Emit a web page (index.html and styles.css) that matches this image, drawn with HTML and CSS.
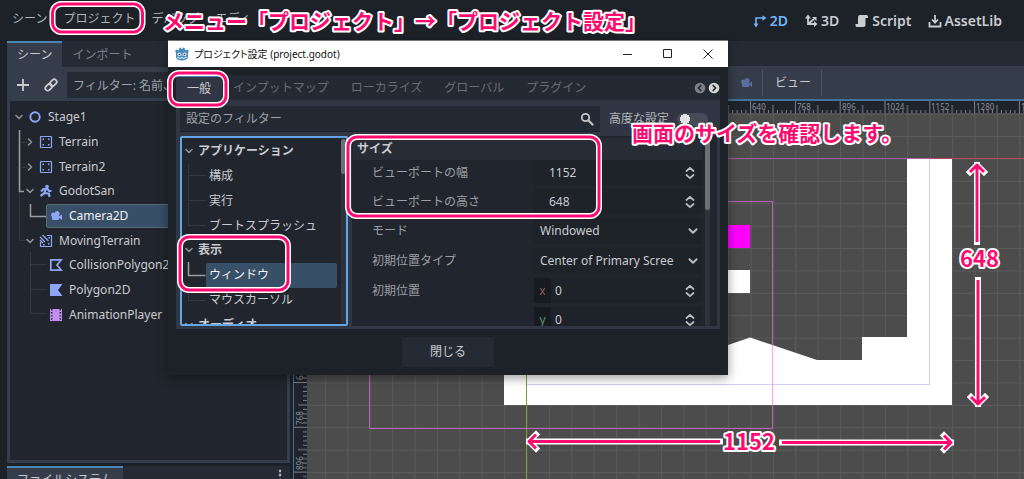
FILE: index.html
```html
<!DOCTYPE html>
<html lang="ja">
<head>
<meta charset="utf-8">
<title>プロジェクト設定</title>
<link rel="stylesheet" href="styles.css">
</head>
<body>
<svg class="defs" width="0" height="0" aria-hidden="true">
  <symbol id="down" viewBox="0 0 10 10"><path d="M2 3.5 5 6.5 8 3.5" fill="none" stroke="currentColor" stroke-width="1.6" stroke-linecap="round" stroke-linejoin="round"/></symbol>
  <symbol id="right" viewBox="0 0 10 10"><path d="M3.5 2 6.5 5 3.5 8" fill="none" stroke="currentColor" stroke-width="1.6" stroke-linecap="round" stroke-linejoin="round"/></symbol>
  <symbol id="updown" viewBox="0 0 12 14"><path d="M2.5 5 6 1.8 9.5 5M2.5 9 6 12.2 9.5 9" fill="none" stroke="currentColor" stroke-width="1.8" stroke-linecap="round" stroke-linejoin="round"/></symbol>
  <symbol id="camera" viewBox="0 0 14 14"><path d="M8.2 2a2.7 2.7 0 0 0-2.6 2A2.3 2.3 0 1 0 3 7.8V10a1 1 0 0 0 1 1h5a1 1 0 0 0 1-1V9l3 2V5.500l-3 1.800V6.500A2.700 2.700 0 0 0 8.200 2z" fill="currentColor"/></symbol>
  <symbol id="tilemap" viewBox="0 0 14 14"><rect x="1.500" y="1.500" width="11" height="11" rx=".5" fill="none" stroke="currentColor" stroke-width="1.200"/><path d="M3.500 3.500h1.500v1.500H3.500zM9 3.500h1.500v1.500H9zM3.500 9h1.500v1.500H3.500zM9 9h1.500v1.500H9z" fill="currentColor"/></symbol>
</svg>

<div class="editor">
  <header class="menubar">
    <nav class="menus">
      <button>シーン</button><button>プロジェクト</button><button>デバッグ</button><button>エディ</button>
    </nav>
    <nav class="modes">
      <button class="mode on"><svg width="14" height="14" viewBox="0 0 14 14"><path d="M3 12V4h8" fill="none" stroke="currentColor" stroke-width="1.600"/><path d="M.5 9.500h5L3 13.500zM9.500 1.300v5.400L13.500 4z" fill="currentColor"/></svg>2D</button>
      <button class="mode"><svg width="14" height="14" viewBox="0 0 14 14"><path d="M4 3v7h7M4 10l6-5" fill="none" stroke="currentColor" stroke-width="1.800"/><path d="M1 4.500h6L4 .5zM10 7v6l3.500-3zM8 3h4.500v4z" fill="currentColor"/></svg>3D</button>
      <button class="mode"><svg width="14" height="14" viewBox="0 0 14 14"><path d="M5 1h6.500A1.500 1.500 0 0 1 13 2.500V4h-2.500v7A2 2 0 0 1 8.500 13H2a1.500 1.500 0 0 1-1.500-1.500V10H3V3a2 2 0 0 1 2-2z" fill="currentColor"/></svg>Script</button>
      <button class="mode"><svg width="14" height="14" viewBox="0 0 14 14"><path d="M1.500 8v4.500h11V8" fill="none" stroke="currentColor" stroke-width="1.800"/><path d="M7 1v7M4 5.500 7 8.700l3-3.200" fill="none" stroke="currentColor" stroke-width="1.800"/></svg>AssetLib</button>
    </nav>
  </header>

  <div class="workspace">
    <aside class="dock">
      <div class="tabs"><button class="tab on">シーン</button><button class="tab">インポート</button></div>
      <section class="panel">
        <div class="tools">
          <button class="icon" aria-label="追加"><svg width="14" height="14" viewBox="0 0 14 14"><path d="M7 1v12M1 7h12" stroke="currentColor" stroke-width="1.800"/></svg></button>
          <button class="icon" aria-label="リンク"><svg width="14" height="14" viewBox="0 0 14 14"><g fill="none" stroke="currentColor" stroke-width="1.800" transform="rotate(-45 7 7)"><rect x="0" y="4.500" width="7.500" height="5" rx="2.500"/><rect x="6.500" y="4.500" width="7.500" height="5" rx="2.500"/></g></svg></button>
          <input class="filter" aria-label="フィルター" placeholder="フィルター: 名前、">
        </div>
        <div class="scene">
          <svg class="guides" width="60" height="230" aria-hidden="true">
            <path d="M9.500 87v52.500h6M12 41.500h5M12 66.500h5M20.500 151v61.500h16M20.500 163.500h16M20.500 188.500h16" fill="none" stroke="#343941"/>
            <path d="M9.500 29v61.500H14M20.500 103v12.500H36" fill="none" stroke="#9a9da1" stroke-width="1.500"/>
          </svg>
          <ul class="tree">
            <li><svg class="fold"><use href="#down"/></svg><svg class="node" viewBox="0 0 14 14"><circle cx="7" cy="7" r="4.700" fill="none" stroke="currentColor" stroke-width="1.900"/></svg>Stage1</li>
            <li class="in1"><svg class="fold"><use href="#right"/></svg><svg class="node"><use href="#tilemap"/></svg>Terrain</li>
            <li class="in1"><svg class="fold"><use href="#right"/></svg><svg class="node"><use href="#tilemap"/></svg>Terrain2</li>
            <li class="in1"><svg class="fold"><use href="#down"/></svg><svg class="node" viewBox="0 0 14 14"><circle cx="8" cy="2.600" r="1.900" fill="currentColor"/><path d="M2 7.500 4.500 5h4l1.500 2h2.500M6.500 5.500l-1 3.500-4 3M6 9l4 .7.500 3.300" fill="none" stroke="currentColor" stroke-width="2.200"/></svg>GodotSan</li>
            <li class="in2 picked"><span><svg class="node"><use href="#camera"/></svg>Camera2D</span></li>
            <li class="in1"><svg class="fold"><use href="#down"/></svg><svg class="node" viewBox="0 0 14 14"><path d="M5 12.500h7.500V1.500H8M1.500 8v4.500H5" fill="none" stroke="currentColor" stroke-width="1.200"/><path d="m1 3 5 5M3.500 1l6 6M1 6l3 3" stroke="currentColor" stroke-width="1.300"/><path d="M9 9h1.500v1.500H9zM4 10h1.500v1.500H4zM9.500 3H11v1.500H9.500z" fill="currentColor"/></svg>MovingTerrain</li>
            <li class="in2"><span><svg class="node" viewBox="0 0 14 14"><path d="M1.800 1.800h10.400L8 7l4.200 5.200H1.800z" fill="none" stroke="currentColor" stroke-width="1.700"/></svg>CollisionPolygon2D</span></li>
            <li class="in2"><span><svg class="node" viewBox="0 0 14 14"><path d="M1 1h12.500L9 7l4.500 6H1z" fill="currentColor"/></svg>Polygon2D</span></li>
            <li class="in2"><span><svg class="node violet" viewBox="0 0 14 14"><path d="M1 1h12v12H1z" fill="currentColor"/><path d="M2.700 1v12M11.300 1v12" stroke="#21262e" stroke-width="1.500" stroke-dasharray="1.400 1.700"/></svg>AnimationPlayer</span></li>
          </ul>
        </div>
      </section>
      <div class="tabs lower"><button class="tab on">ファイルシステム</button><span class="dots">⋮</span></div>
    </aside>

    <main class="main">
      <div class="doctabs"></div>
      <div class="toolbar">
        <button class="cam" aria-label="カメラ"><svg width="14" height="14"><use href="#camera"/></svg></button>
        <button class="view">ビュー</button>
      </div>
      <div class="viewport">
        <svg class="stage" width="100%" height="100%">
          <defs>
            <pattern id="grid" x="526.500" y="158.500" width="22.400" height="22.400" patternUnits="userSpaceOnUse"><path d="M0 .5h22.400M.5 0v22.400" stroke="#5b5b5b" fill="none"/></pattern>
            <pattern id="tx" x="526.100" y="101" width="44.800" height="13" patternUnits="userSpaceOnUse"><path d="M.5 0v13M22.900 4v9M5 9v4M9.500 9v4M14 9v4M18.400 9v4M27.400 9v4M31.900 9v4M36.300 9v4M40.800 9v4" stroke="#7d8086"/></pattern>
            <pattern id="ty" x="294" y="158" width="13" height="44.800" patternUnits="userSpaceOnUse"><path d="M0 .5h13M4 22.900h9M9 5h4M9 9.500h4M9 14h4M9 18.400h4M9 27.400h4M9 31.900h4M9 36.300h4M9 40.800h4" stroke="#7d8086"/></pattern>
          </defs>
          <g transform="translate(-294 -101)">
            <rect x="294" y="101" width="3000" height="2000" fill="#4c4c4c"/>
            <rect x="294" y="101" width="3000" height="2000" fill="url(#grid)"/>
            <path d="M504 360h180l66-22.500 67 22.500h45v-23h45V158h45v247H504z" fill="#fff"/>
            <path d="M600 225h150v23H600z" fill="#f0f"/>
            <path d="M600 270h150v23H600z" fill="#fff"/>
            <path d="M526.500 158.500H3000" stroke="#b04a58"/>
            <path d="M526.500 158.500V3000" stroke="#7aa52c"/>
            <path d="M526.500 158.500h403v226h-403" fill="none" stroke="#9c8cf0" stroke-opacity=".45"/>
            <path d="M369.500 201.500h403v227h-403z" fill="none" stroke="#f06cf4" stroke-opacity=".65"/>
            <path d="M526.500 158.500H907" stroke="#a05a9a"/>
            <rect x="294" y="101" width="3000" height="12" fill="#1f242c"/>
            <rect x="307" y="101" width="3000" height="12" fill="url(#tx)"/>
            <rect x="294" y="113" width="13" height="2000" fill="#1f242c"/>
            <rect x="294" y="113" width="13" height="2000" fill="url(#ty)"/>
            <g class="ticks">
              <text x="752" y="110">640</text><text x="797" y="110">768</text><text x="842" y="110">896</text><text x="886" y="110">1024</text><text x="931" y="110">1152</text><text x="976" y="110">1280</text><text x="1021" y="110">1408</text>
              <text transform="translate(303 380) rotate(-90)">640</text><text transform="translate(303 425) rotate(-90)">768</text><text transform="translate(303 470) rotate(-90)">896</text>
            </g>
          </g>
        </svg>
      </div>
    </main>
  </div>
</div>

<section class="dialog" role="dialog" aria-label="プロジェクト設定">
  <div class="title">
    <svg width="14" height="14" viewBox="0 0 14 14"><path d="M1 5.500 0 4l1.500-1.500L3 3.300l1-.6L4.300 1 6 .6l.5 1.400h1L8 .6l1.700.4.300 1.700 1 .6 1.500-.8L14 4l-1 1.500V10c0 2-3 3.500-6 3.500S1 12 1 10z" fill="#478cbf"/><circle cx="4.300" cy="7.300" r="1.700" fill="#fff"/><circle cx="9.700" cy="7.300" r="1.700" fill="#fff"/><circle cx="4.500" cy="7.300" r=".9" fill="#414042"/><circle cx="9.500" cy="7.300" r=".9" fill="#414042"/><path d="M7 7v2M2 10.200l2 .3.300 1h1.500l.2-.9h2l.2.900h1.500l.3-1 2-.3" fill="none" stroke="#fff" stroke-width=".8"/></svg>
    <span>プロジェクト設定 (project.godot)</span>
    <div class="winbtns">
      <button aria-label="最小化"><svg width="10" height="10"><path d="M0 5.500h9" stroke="#222"/></svg></button>
      <button aria-label="最大化"><svg width="10" height="10"><path d="M.5 .5h8v8h-8z" fill="none" stroke="#222"/></svg></button>
      <button aria-label="閉じる"><svg width="10" height="10"><path d="m.5.500 9 9m0-9-9 9" stroke="#222"/></svg></button>
    </div>
  </div>
  <div class="content">
    <div class="dtabs">
      <button class="dtab on">一般</button><button class="dtab">インプットマップ</button><button class="dtab">ローカライズ</button><button class="dtab">グローバル</button><button class="dtab">プラグイン</button>
      <svg class="pager" width="26" height="12" viewBox="0 0 26 12"><circle cx="6" cy="6" r="5.300" fill="#7d8086"/><circle cx="20" cy="6" r="5.300" fill="#d4d6d8"/><path d="M7.300 3 4.500 6l2.800 3M18.700 3l2.800 3-2.800 3" fill="none" stroke="#242a33" stroke-width="1.700"/></svg>
    </div>
    <div class="dpanel">
      <div class="searchrow">
        <div class="search"><input aria-label="設定のフィルター" placeholder="設定のフィルター"><svg width="14" height="14" viewBox="0 0 14 14"><circle cx="5.500" cy="5.500" r="3.700" fill="none" stroke="#c4c6c9" stroke-width="1.800"/><path d="m8.500 8.500 4 4" stroke="#c4c6c9" stroke-width="2.200" stroke-linecap="round"/></svg></div>
        <label class="adv">高度な設定<input type="checkbox" class="switch"></label>
      </div>
      <div class="split">
        <div class="cats">
          <svg class="guides" width="60" height="190" aria-hidden="true"><path d="M6.500 26v61.500h17M6.500 37.500h17M6.500 62.500h17M6.500 145v17.500h17" fill="none" stroke="#343941"/><path d="M6.500 124v13.500h17" fill="none" stroke="#9a9da1" stroke-width="1.500"/></svg>
          <ul class="ctree">
            <li class="head"><svg class="fold"><use href="#down"/></svg>アプリケーション</li>
            <li><span>構成</span></li><li><span>実行</span></li><li><span>ブートスプラッシュ</span></li>
            <li class="head"><svg class="fold"><use href="#down"/></svg>表示</li>
            <li><span class="sel">ウィンドウ</span></li><li><span>マウスカーソル</span></li>
            <li class="head"><svg class="fold"><use href="#down"/></svg>オーディオ</li>
          </ul>
          <div class="bar"><i class="short"></i></div>
        </div>
        <div class="props">
          <div class="fields">
            <h3>サイズ</h3>
            <div class="row"><label for="w">ビューポートの幅</label><div class="num"><input id="w" class="pad" value="1152"><svg><use href="#updown"/></svg></div></div>
            <div class="row"><label for="h">ビューポートの高さ</label><div class="num"><input id="h" class="pad" value="648"><svg><use href="#updown"/></svg></div></div>
            <div class="row"><label for="m">モード</label><div class="num tall"><select id="m"><option>Windowed</option></select><svg class="chev" viewBox="0 0 10 10"><use href="#down"/></svg></div></div>
            <div class="row"><label for="p">初期位置タイプ</label><div class="num tall"><select id="p"><option>Center of Primary Scree</option></select><svg class="chev" viewBox="0 0 10 10"><use href="#down"/></svg></div></div>
            <div class="row"><label for="x">初期位置</label><div class="num"><b class="ax red">x</b><input id="x" value="0"><svg><use href="#updown"/></svg></div></div>
            <div class="row"><span></span><div class="num"><b class="ax green">y</b><input aria-label="初期位置 y" value="0"><svg><use href="#updown"/></svg></div></div>
          </div>
          <div class="bar"><i></i></div>
        </div>
      </div>
    </div>
    <button class="close">閉じる</button>
  </div>
</section>

<svg class="notes" width="1024" height="479">
  <defs>
    <g id="marks" fill="none" stroke-linecap="round" stroke-linejoin="round">
      <rect x="52.500" y="4" width="90" height="28" rx="9"/>
      <rect x="170" y="73" width="56" height="32" rx="9"/>
      <rect x="348" y="137" width="251" height="79" rx="9"/>
      <rect x="180" y="237" width="108" height="53" rx="9"/>
    </g>
    <g id="arrows" fill="none" stroke-linejoin="round">
      <path d="M977 242V165M970 172 977 165l7 7M978 280v124M971 397 978 404l7-7M720 441.500H529M536 434.500 529 441.500l7 7M782 442.500h169M944 435.500l7 7-7 7"/>
    </g>
  </defs>
  <use href="#marks" class="halo"/><use href="#marks" class="ink"/>
  <use href="#arrows" class="halo round"/><use href="#arrows" class="ink"/>
  <g class="words">
    <text x="163" y="29">メニュー「プロジェクト」→「プロジェクト設定」</text>
    <text x="632" y="141">画面のサイズを確認します。</text>
    <text class="big" x="960" y="267">648</text>
    <text class="big" x="723" y="450">1152</text>
  </g>
</svg>
</body>
</html>
```
FILE: styles.css
```css
* { box-sizing: border-box; }
body { margin: 0; height: 100vh; overflow: hidden; position: relative; background: #1d2229; color: #c9cbce; font: 12px/18px "Noto Sans", "Noto Sans CJK JP", sans-serif; }
button, input, select { font: inherit; color: inherit; background: none; border: 0; margin: 0; padding: 0; outline: 0; border-radius: 0; }
input, select { min-width: 0; width: 100%; }
ul { list-style: none; margin: 0; padding: 0; }
svg { flex: none; }
.defs { position: absolute; }

.editor { display: flex; flex-direction: column; height: 100%; }
.menubar { display: flex; flex: none; justify-content: space-between; height: 41px; padding: 0 22px 0 12px; }
.menus { display: flex; gap: 16px; }
.menus button { padding-bottom: 4px; color: #b2b4b8; }
.modes { display: flex; gap: 16px; }
.mode { display: flex; align-items: center; gap: 3px; font-size: 14px; font-weight: 600; }
.mode.on { color: #70b5fb; }

.workspace { display: flex; flex: 1; min-height: 0; padding-left: 7px; gap: 3px; }
.dock { display: flex; flex-direction: column; flex: 0 0 283px; min-width: 0; }
.tabs { display: flex; height: 26px; flex: none; background: #252b35; }
.tab { padding: 0 10px; color: #7c8087; border-top: 2px solid transparent; white-space: nowrap; }
.tab.on { background: #363d4a; color: #c9cbce; border-top-color: #4a85b5; }
.panel { display: flex; flex-direction: column; flex: 1; min-height: 0; gap: 3px; padding: 5px 3px 3px; background: #363d4a; }
.tools { display: flex; align-items: center; height: 26px; padding-left: 6px; }
.icon { display: flex; flex: none; width: 28px; }
.icon + .icon { width: 23px; }
.filter { flex: 1; height: 26px; padding: 0 6px; background: #252b35; }
::placeholder { color: #9fa2a7; opacity: 1; }
.scene { position: relative; flex: 1; min-height: 0; padding-top: 4px; background: #21262e; overflow: hidden; }
.guides { position: absolute; left: 0; top: 0; pointer-events: none; }
.tree { display: grid; grid-auto-rows: 1fr; height: 222px; }
.tree li { display: flex; align-items: center; padding-left: 4px; white-space: nowrap; }
.tree .in1 { padding-left: 15px; }
.tree .in2 { padding-left: 36px; align-items: stretch; }
.in2 span { display: flex; align-items: center; flex: 1; padding-left: 3px; }
.picked span { background: #384f68; border: 1px solid #58697a; border-radius: 2px; color: #f0f2f4; padding-left: 2px; }
.fold { width: 10px; height: 10px; margin-right: 4px; color: #8e9196; }
.node { width: 14px; height: 14px; margin-right: 6px; color: #8da5f3; }
.node.violet { color: #c38ef1; }
.lower { margin-top: 3px; height: 13px; overflow: hidden; justify-content: space-between; }
.lower .tab { height: 26px; }
.dots { padding-right: 4px; font-weight: bold; }

.main { display: flex; flex-direction: column; flex: 1; min-width: 0; }
.doctabs { height: 25px; flex: none; background: #252b35; }
.toolbar { display: flex; align-items: center; height: 33px; flex: none; padding-left: 446px; background: #363d4a; }
.cam { display: flex; padding-right: 9px; color: #5a6ca0; }
.view { height: 26px; padding: 0 10px 0 12px; border: solid #4d5461; border-width: 0 1px; }
.viewport { flex: 1; min-height: 0; border: solid #42719c; border-width: 2px 0 0 1px; }
.stage { display: block; }
.ticks { font-size: 8px; fill: #8d9096; }

.dialog { position: absolute; left: 168px; top: 40px; width: 560px; background: #1d2229; border-top: 1px solid #777; box-shadow: 0 3px 10px rgba(0, 0, 0, .4); }
.title { display: flex; align-items: center; gap: 5px; height: 26px; padding-left: 7px; background: #fff; color: #111; font-size: 10px; font-feature-settings: "palt"; }
.winbtns { display: flex; margin-left: auto; }
.winbtns button { display: flex; width: 40px; justify-content: center; }
.content { display: flex; flex-direction: column; padding: 8px; }
.dtabs { display: flex; align-items: center; height: 25px; background: #242a34; }
.dtab { height: 25px; padding: 0 11px; color: #686c73; white-space: nowrap; }
.dtab.on { background: #303643; color: #c9cbce; border-top: 2px solid #4a85b5; }
.pager { margin-left: auto; }
.dpanel { padding: 6px 3px 3px 4px; background: #303643; }
.searchrow { display: flex; align-items: center; }
.search { display: flex; align-items: center; flex: 0 0 420px; height: 26px; padding: 0 6px; background: #242a33; border-bottom: 1px solid #1c2027; }
.search input { flex: 1; }
.adv { display: flex; align-items: center; gap: 8px; padding-left: 9px; color: #b5b7bb; white-space: nowrap; }
.switch { flex: none; appearance: none; width: 31px; height: 13px; border-radius: 7px; background: radial-gradient(circle at 8px 6px, #e0e1e3 5px, transparent 5px) #454b57; }
.split { display: flex; gap: 4px; padding-top: 4px; height: 194px; }
.cats { position: relative; flex: 0 0 168px; display: flex; overflow: hidden; background: #21262e; border: 2px solid #63a5e6; border-radius: 2px; padding-top: 1px; }
.ctree { flex: 1; display: grid; grid-auto-rows: 1fr; height: 198px; }
.ctree li { display: flex; align-items: center; padding-left: 24px; white-space: nowrap; }
.ctree li span { flex: 1; display: flex; align-items: center; align-self: stretch; padding-left: 3px; }
.ctree .head { padding-left: 2px; font-weight: 700; }
.ctree .sel { background: #384f68; border-radius: 2px; color: #f0f2f4; margin-right: 4px; }
.bar { flex: none; width: 5px; background: #2d333d; border-radius: 3px; }
.bar i { display: block; height: 74px; background: #6b6f76; border-radius: 3px; }
.bar .short { height: 35px; }
.props { flex: 1; min-width: 0; display: flex; gap: 3px; overflow: hidden; padding: 0 7px 0 1px; background: #21262e; }
.fields { flex: 1; min-width: 0; display: flex; flex-direction: column; gap: 4px; }
.fields h3 { margin: 2px 0 -4px; padding: 2px 4px; font-size: 12px; line-height: 18px; background: #282c34; }
.row { display: grid; grid-template-columns: 181px minmax(0, 1fr); align-items: center; }
.row label { padding-left: 19px; color: #9b9ea3; }
.num { position: relative; display: flex; align-items: center; height: 25px; padding-right: 6px; background: #1e2229; border-radius: 2px; }
.num.tall { height: 26px; }
.num input { flex: 1; padding-left: 4px; }
.num .pad { padding-left: 15px; }
.num select { flex: 1; appearance: none; padding-left: 6px; }
.num svg { width: 12px; height: 14px; color: #b9bbbf; }
.num .chev { position: absolute; right: 3px; pointer-events: none; }
.ax { flex: none; width: 17px; height: 25px; text-align: center; line-height: 25px; font-weight: 400; background: #171a20; }
.red { color: #8a5f55; }
.green { color: #5a9468; }
.close { align-self: center; width: 92px; height: 30px; margin-top: 8px; background: #252b35; border-radius: 2px; }

.notes { position: absolute; left: 0; top: 0; pointer-events: none; }
.halo { stroke: #fff; stroke-width: 6px; }
.round { stroke-linecap: square; }
.ink { stroke: #ff0a70; stroke-width: 3px; }
.words { font: 700 21px "Noto Sans CJK JP", sans-serif; fill: #ff0a70; stroke: #fff; stroke-width: 4px; stroke-linejoin: round; paint-order: stroke; }
.big { font-size: 22px; }
```
